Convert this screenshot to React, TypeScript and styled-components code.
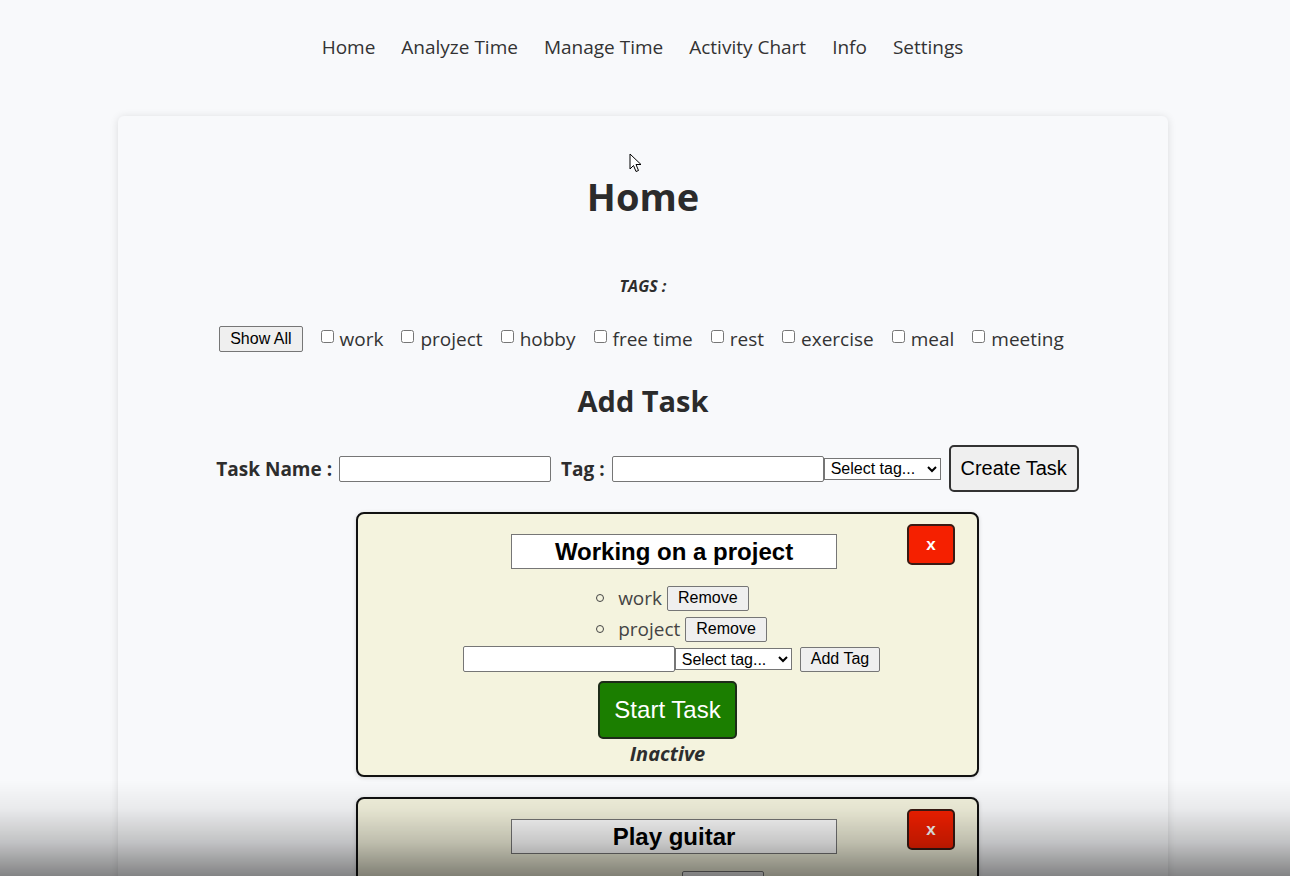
import React from "react";
import styled, { createGlobalStyle } from "styled-components";

const Global = createGlobalStyle`
  html, body { margin: 0; padding: 0; background: #f8f9fb; }
  body { font-family: "Open Sans", "Noto Sans", sans-serif; color: #2d2d2d; }
`;

const Page = styled.div`
  min-height: 876px;
  display: flex;
  flex-direction: column;
  align-items: center;
`;

const Nav = styled.nav`
  display: flex;
  gap: 26px;
  padding-top: 33px;
  height: 116px;
  box-sizing: border-box;
  font-size: 19px;
  color: #333;
  margin-right: 5px;
`;

const NavLink = styled.a`
  color: #333;
  text-decoration: none;
  line-height: 28px;
  height: 28px;
`;

const Card = styled.main`
  width: 1050px;
  box-sizing: border-box;
  background: #f8f9fb;
  border-radius: 6px;
  box-shadow: 0 1px 8px rgba(0, 0, 0, 0.12);
  display: flex;
  flex-direction: column;
  align-items: center;
  padding: 52px 0 40px;
  margin-right: 4px;
`;

const Title = styled.h1`
  margin: 0;
  font-size: 38px;
  font-weight: 700;
  line-height: 56px;
  color: #2b2b2b;
`;

const TagsLabel = styled.div`
  margin-top: 50px;
  font-size: 16px;
  font-weight: 700;
  font-style: italic;
  line-height: 24px;
`;

const TagRow = styled.div`
  margin-top: 28px;
  display: flex;
  align-items: center;
  gap: 18px;
  margin-left: -3px;
`;

const NativeButton = styled.button<{ $h?: number; $ml?: number }>`
  font-family: Arial, "Liberation Sans", sans-serif;
  font-size: 16px;
  color: #000;
  background: #efefef;
  border: 1px solid #767676;
  border-radius: 2px;
  padding: 2px 10px;
  height: ${(p) => p.$h ?? 26}px;
  margin-left: ${(p) => p.$ml ?? 0}px;
  cursor: pointer;
`;

const CheckLabel = styled.label`
  display: flex;
  align-items: center;
  font-size: 19px;
  color: #333;
  line-height: 26px;
`;

const Check = styled.input`
  width: 13px;
  height: 13px;
  margin: 0 6px 6px 0;
`;

const SubTitle = styled.h2`
  margin: 29px 0 0;
  font-size: 29px;
  font-weight: 700;
  line-height: 40px;
  color: #2b2b2b;
`;

const FormRow = styled.div`
  margin-top: 24px;
  display: flex;
  align-items: center;
  margin-left: 9px;
`;

const FieldLabel = styled.span`
  font-size: 19px;
  font-weight: 700;
  margin-right: 7px;
`;

const TextInput = styled.input<{ $w: number; $mr?: number }>`
  width: ${(p) => p.$w}px;
  height: 26px;
  box-sizing: border-box;
  border: 1px solid #767676;
  border-radius: 2px;
  background: #fff;
  margin-right: ${(p) => p.$mr ?? 0}px;
`;

const Select = styled.select`
  font-family: Arial, "Liberation Sans", sans-serif;
  font-size: 16px;
  color: #000;
  height: 22px;
  width: 117px;
  box-sizing: border-box;
  border: 1px solid #767676;
  border-radius: 0;
  background: #fff;
  padding: 0 0 0 2px;
`;

const BigButton = styled.button`
  font-family: Arial, "Liberation Sans", sans-serif;
  font-size: 20px;
  color: #000;
  background: #efefef;
  border: 2px solid #333;
  border-radius: 5px;
  width: 130px;
  height: 47px;
  margin-left: 8px;
`;

const TaskList = styled.div`
  margin-top: 20px;
  display: flex;
  flex-direction: column;
  gap: 20px;
  margin-left: 49px;
`;

const TaskCard = styled.div`
  position: relative;
  width: 623px;
  box-sizing: border-box;
  background: #f4f3de;
  border: 2px solid #111;
  border-radius: 8px;
  box-shadow: 0 1px 4px rgba(0, 0, 0, 0.15);
  display: flex;
  flex-direction: column;
  align-items: center;
  padding: 20px 0 7px;
`;

const TaskTitle = styled.input`
  width: 326px;
  height: 35px;
  box-sizing: border-box;
  border: 1px solid #767676;
  background: #fff;
  font-family: Arial, "Liberation Sans", sans-serif;
  font-size: 24px;
  font-weight: 700;
  color: #000;
  text-align: center;
  margin-left: 13px;
`;

const DeleteButton = styled.button`
  position: absolute;
  top: 10px;
  right: 22px;
  width: 48px;
  height: 41px;
  background: #f52000;
  border: 2px solid #3a1a14;
  border-radius: 5px;
  color: #fff;
  font-family: Arial, "Liberation Sans", sans-serif;
  font-weight: 700;
  font-size: 17px;
`;

const TagList = styled.ul`
  margin: 16px 0 0;
  padding: 0 0 0 28px;
  list-style: none;
  display: flex;
  flex-direction: column;
  align-items: flex-start;
  gap: 5px;
`;

const TagItem = styled.li`
  display: flex;
  align-items: center;
  font-size: 19px;
  color: #444;
  &::before {
    content: "";
    width: 6px;
    height: 6px;
    border: 1.5px solid #444;
    border-radius: 50%;
    margin-right: 14px;
  }
`;

const TagText = styled.span`
  margin-right: 5px;
`;

const AddRow = styled.div`
  margin-top: 4px;
  display: flex;
  align-items: center;
  margin-left: 8px;
`;

const StartButton = styled.button`
  margin-top: 9px;
  width: 139px;
  height: 58px;
  background: #1b7e00;
  border: 2px solid #1d2b18;
  border-radius: 5px;
  color: #fff;
  font-family: Arial, "Liberation Sans", sans-serif;
  font-size: 24px;
`;

const Status = styled.div`
  margin-top: 1px;
  font-size: 20px;
  font-weight: 700;
  font-style: italic;
  line-height: 28px;
`;

const BottomShade = styled.div`
  position: fixed;
  left: 0;
  right: 0;
  bottom: 0;
  height: 96px;
  pointer-events: none;
  background: linear-gradient(
    to bottom,
    rgba(0, 0, 0, 0) 0%,
    rgba(0, 0, 0, 0.06) 30%,
    rgba(0, 0, 0, 0.22) 65%,
    rgba(0, 0, 0, 0.47) 100%
  );
`;

const Cursor = styled.svg`
  position: absolute;
  left: 629px;
  top: 153px;
`;

const tags = ["work", "project", "hobby", "free time", "rest", "exercise", "meal", "meeting"];

type Task = { name: string; tags: string[] };
const tasks: Task[] = [
  { name: "Working on a project", tags: ["work", "project"] },
  { name: "Play guitar", tags: ["hobby"] },
];

function TaskBox({ task }: { task: Task }) {
  return (
    <TaskCard>
      <TaskTitle defaultValue={task.name} />
      <DeleteButton>x</DeleteButton>
      <TagList>
        {task.tags.map((t) => (
          <TagItem key={t}>
            <TagText>{t}</TagText>
            <NativeButton $h={25}>Remove</NativeButton>
          </TagItem>
        ))}
      </TagList>
      <AddRow>
        <TextInput $w={212} />
        <Select defaultValue="">
          <option value="">Select tag...</option>
        </Select>
        <NativeButton $h={25} $ml={8}>Add Tag</NativeButton>
      </AddRow>
      <StartButton>Start Task</StartButton>
      <Status>Inactive</Status>
    </TaskCard>
  );
}

export default function App() {
  return (
    <>
      <Global />
      <Page>
        <Nav>
          {["Home", "Analyze Time", "Manage Time", "Activity Chart", "Info", "Settings"].map((n) => (
            <NavLink key={n} href="#">{n}</NavLink>
          ))}
        </Nav>
        <Card>
          <Title>Home</Title>
          <TagsLabel>TAGS :</TagsLabel>
          <TagRow>
            <NativeButton>Show All</NativeButton>
            {tags.map((t) => (
              <CheckLabel key={t}>
                <Check type="checkbox" />
                {t}
              </CheckLabel>
            ))}
          </TagRow>
          <SubTitle>Add Task</SubTitle>
          <FormRow>
            <FieldLabel>Task Name :</FieldLabel>
            <TextInput $w={212} $mr={10} />
            <FieldLabel>Tag :</FieldLabel>
            <TextInput $w={212} />
            <Select defaultValue="">
              <option value="">Select tag...</option>
            </Select>
            <BigButton>Create Task</BigButton>
          </FormRow>
          <TaskList>
            {tasks.map((t) => (
              <TaskBox key={t.name} task={t} />
            ))}
          </TaskList>
        </Card>
      </Page>
      <Cursor width="14" height="20" viewBox="0 0 14 20">
        <path d="M1 1 L1 16 L4.5 12.5 L7 18.5 L9.5 17.5 L7 11.5 L12 11.5 Z" fill="#fff" stroke="#000" strokeWidth="1" strokeLinejoin="round" />
      </Cursor>
      <BottomShade />
    </>
  );
}
